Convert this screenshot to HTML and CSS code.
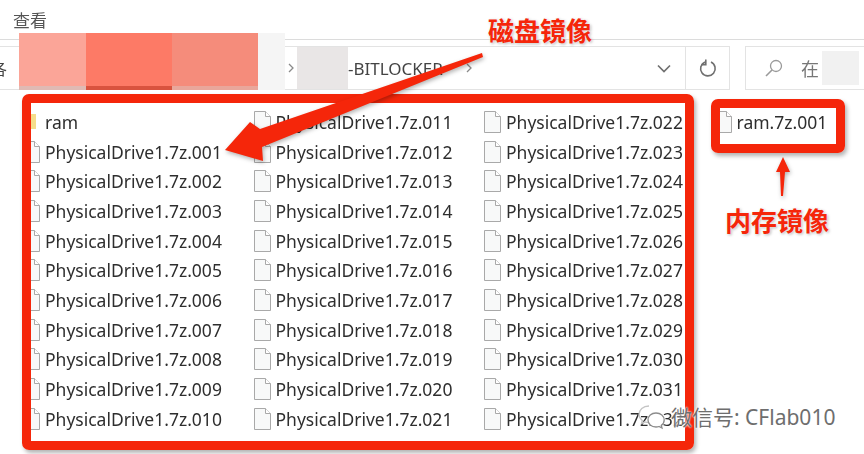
FILE: index.html
```html
<!DOCTYPE html>
<html lang="zh-CN">
<head>
    <meta charset="UTF-8">
    <meta name="viewport" content="width=device-width, initial-scale=1.0">
    <title>磁盘镜像</title>
    <link rel="stylesheet" href="styles.css">
</head>
<body>

<svg class="defs" width="0" height="0">
    <symbol id="file" viewBox="0 0 17 22">
        <path d="M.5.5h11l5 5v16H.5z" fill="#f8f9f9" stroke="#a9a9a9"/>
        <path d="M11.5.5v5h5" fill="#fff" stroke="#a9a9a9"/>
    </symbol>
</svg>

<div class="explorer">
    <!-- Menu -->
    <div class="menu"><span>查看</span></div>

    <!-- Address bar -->
    <div class="bar">
        <div class="address">
            <span class="cut">各</span>
            <svg class="crumb first" width="8" height="12" viewBox="0 0 8 12"><path d="M2 2l4 4-4 4" fill="none" stroke="#8a8a8a" stroke-width="1.3"/></svg>
            <span class="hidden-name"></span>
            <span class="path">-BITLOCKER</span>
            <svg class="crumb" width="8" height="12" viewBox="0 0 8 12"><path d="M2 2l4 4-4 4" fill="none" stroke="#8a8a8a" stroke-width="1.3"/></svg>
            <svg class="drop" width="14" height="9" viewBox="0 0 14 9"><path d="M1 1.500l6 6 6-6" fill="none" stroke="#707070" stroke-width="1.700"/></svg>
        </div>
        <div class="refresh">
            <svg width="18" height="18" viewBox="0 0 18 18"><path d="M6 2.900A7.300 7.300 0 1 0 12 3" fill="none" stroke="#6f6f6f" stroke-width="1.600"/><path d="M6.800.4v5.200H2.300" fill="none" stroke="#6f6f6f" stroke-width="1.600"/></svg>
        </div>
        <div class="search">
            <svg width="18" height="18" viewBox="0 0 18 18"><circle cx="11" cy="7" r="5.500" fill="none" stroke="#9a9a9a" stroke-width="1.300"/><path d="M7 11l-6 6" stroke="#9a9a9a" stroke-width="1.600"/></svg>
            <span class="search-text">在</span>
            <span class="hidden-search"></span>
        </div>
    </div>

    <!-- File list -->
    <div class="files">
        <div class="file"><span class="folder"></span>ram</div>
        <div class="file"><svg class="icon"><use href="#file"/></svg>PhysicalDrive1.7z.001</div>
        <div class="file"><svg class="icon"><use href="#file"/></svg>PhysicalDrive1.7z.002</div>
        <div class="file"><svg class="icon"><use href="#file"/></svg>PhysicalDrive1.7z.003</div>
        <div class="file"><svg class="icon"><use href="#file"/></svg>PhysicalDrive1.7z.004</div>
        <div class="file"><svg class="icon"><use href="#file"/></svg>PhysicalDrive1.7z.005</div>
        <div class="file"><svg class="icon"><use href="#file"/></svg>PhysicalDrive1.7z.006</div>
        <div class="file"><svg class="icon"><use href="#file"/></svg>PhysicalDrive1.7z.007</div>
        <div class="file"><svg class="icon"><use href="#file"/></svg>PhysicalDrive1.7z.008</div>
        <div class="file"><svg class="icon"><use href="#file"/></svg>PhysicalDrive1.7z.009</div>
        <div class="file"><svg class="icon"><use href="#file"/></svg>PhysicalDrive1.7z.010</div>

        <div class="file"><svg class="icon"><use href="#file"/></svg>PhysicalDrive1.7z.011</div>
        <div class="file"><svg class="icon"><use href="#file"/></svg>PhysicalDrive1.7z.012</div>
        <div class="file"><svg class="icon"><use href="#file"/></svg>PhysicalDrive1.7z.013</div>
        <div class="file"><svg class="icon"><use href="#file"/></svg>PhysicalDrive1.7z.014</div>
        <div class="file"><svg class="icon"><use href="#file"/></svg>PhysicalDrive1.7z.015</div>
        <div class="file"><svg class="icon"><use href="#file"/></svg>PhysicalDrive1.7z.016</div>
        <div class="file"><svg class="icon"><use href="#file"/></svg>PhysicalDrive1.7z.017</div>
        <div class="file"><svg class="icon"><use href="#file"/></svg>PhysicalDrive1.7z.018</div>
        <div class="file"><svg class="icon"><use href="#file"/></svg>PhysicalDrive1.7z.019</div>
        <div class="file"><svg class="icon"><use href="#file"/></svg>PhysicalDrive1.7z.020</div>
        <div class="file"><svg class="icon"><use href="#file"/></svg>PhysicalDrive1.7z.021</div>

        <div class="file"><svg class="icon"><use href="#file"/></svg>PhysicalDrive1.7z.022</div>
        <div class="file"><svg class="icon"><use href="#file"/></svg>PhysicalDrive1.7z.023</div>
        <div class="file"><svg class="icon"><use href="#file"/></svg>PhysicalDrive1.7z.024</div>
        <div class="file"><svg class="icon"><use href="#file"/></svg>PhysicalDrive1.7z.025</div>
        <div class="file"><svg class="icon"><use href="#file"/></svg>PhysicalDrive1.7z.026</div>
        <div class="file"><svg class="icon"><use href="#file"/></svg>PhysicalDrive1.7z.027</div>
        <div class="file"><svg class="icon"><use href="#file"/></svg>PhysicalDrive1.7z.028</div>
        <div class="file"><svg class="icon"><use href="#file"/></svg>PhysicalDrive1.7z.029</div>
        <div class="file"><svg class="icon"><use href="#file"/></svg>PhysicalDrive1.7z.030</div>
        <div class="file"><svg class="icon"><use href="#file"/></svg>PhysicalDrive1.7z.031</div>
        <div class="file"><svg class="icon"><use href="#file"/></svg>PhysicalDrive1.7z.032</div>

        <div class="file"><svg class="icon"><use href="#file"/></svg>ram.7z.001</div>
    </div>
</div>

<!-- Mosaic over the path -->
<div class="mosaic">
    <span class="tile a"></span>
    <span class="tile b"></span>
    <span class="tile c"></span>
    <span class="tile d"></span>
</div>

<!-- Red marks -->
<div class="frame disk-frame"></div>
<div class="frame ram-frame"></div>

<svg class="arrows" width="864" height="454" viewBox="0 0 864 454">
    <polygon points="225,150 250,122 260,129 482,53 483,57 262,147 263,161" fill="#f5260a"/>
    <polygon points="783,157 790,172 785,172 783,196 781,196 780,172 776,172" fill="#f5260a"/>
</svg>

<div class="label disk-label">磁盘镜像</div>
<div class="label ram-label">内存镜像</div>

<!-- Watermark -->
<div class="watermark">
    <svg width="28" height="26" viewBox="0 0 28 26">
        <path d="M11 2C5 2 1 6 1 10.500c0 2.500 1.300 4.500 3.300 6l-.8 3 3.300-1.700c1.400.4 2.700.6 4.200.6" fill="none" stroke="#c4c4c4" stroke-width="1.300"/>
        <path d="M18 9c-4.700 0-8 3-8 7s3.300 7 8 7c1 0 2-.2 3-.5l3 1.500-.7-2.600c1.800-1.300 2.900-3.200 2.900-5.400 0-4-3.500-7-8.200-7z" fill="#fff" stroke="#8c8c8c" stroke-width="1.300"/>
    </svg>
    <span>微信号: CFlab010</span>
</div>

</body>
</html>
```

FILE: styles.css
```css
* {
    margin: 0;
    padding: 0;
    box-sizing: border-box;
}

body {
    width: 864px;
    height: 454px;
    overflow: hidden;
    position: relative;
    background-color: #fff;
    font-family: "Noto Sans", "Noto Sans CJK SC", sans-serif;
    color: #2e2e2e;
}

.defs {
    position: absolute;
}

.explorer {
    filter: blur(0.35px);
}

/* Menu */
.menu {
    height: 40px;
    padding: 10px 0 0 13px;
    font-size: 17px;
    line-height: 22px;
    color: #555;
    border-bottom: 1px solid #dcdcdc;
}

/* Address bar */
.bar {
    display: flex;
    height: 44px;
    margin-top: 6px;
}

.address {
    display: flex;
    align-items: center;
    width: 686px;
    border: 1px solid #e3e3e3;
    border-left: 0;
    font-size: 17px;
    color: #444;
}

.cut {
    width: 7px;
    overflow: hidden;
    direction: rtl;
    font-size: 16px;
}

.crumb {
    margin-left: 12px;
}

.crumb.first {
    margin-left: 280px;
}

.hidden-name {
    width: 51px;
    height: 42px;
    margin-left: 2px;
    background-color: #e9e6e6;
}

.path {
    width: 105px;
}

.drop {
    margin-left: 184px;
}

.refresh {
    display: flex;
    align-items: center;
    justify-content: center;
    width: 44px;
    border: 1px solid #e3e3e3;
    border-left: 0;
}

.search {
    display: flex;
    align-items: center;
    width: 119px;
    margin-left: 15px;
    padding-left: 19px;
    border: 1px solid #e3e3e3;
    border-right: 0;
    color: #777;
    font-size: 18px;
}

.search-text {
    margin-left: 18px;
}

.hidden-search {
    width: 37px;
    height: 34px;
    margin-left: 3px;
    background-color: #f1f1f1;
}

/* File list */
.files {
    display: grid;
    grid-auto-flow: column;
    grid-template-rows: repeat(11, 29.7px);
    grid-auto-columns: 230.5px;
    margin-top: 17px;
    padding-left: 23px;
}

.file {
    display: flex;
    align-items: center;
    font-size: 17.5px;
    white-space: nowrap;
}

.icon {
    width: 17px;
    height: 22px;
    margin-right: 5px;
    flex-shrink: 0;
}

.folder {
    width: 13px;
    height: 15px;
    margin-right: 9px;
    background-color: #f5dd8b;
}

/* Mosaic */
.mosaic {
    position: absolute;
    left: 19px;
    top: 33px;
    display: flex;
    height: 57px;
}

.tile {
    display: block;
    height: 57px;
    border-bottom: 4px solid;
}

.tile.a {
    width: 67px;
    background-color: #fba598;
    border-color: #e0bab4;
}

.tile.b {
    width: 86px;
    background-color: #fd7a66;
    border-color: #d9533f;
}

.tile.c {
    width: 86px;
    background-color: #f58c7b;
    border-color: #e9a79b;
}

.tile.d {
    width: 27px;
    background-color: #f5f5f5;
    border-color: #f5f5f5;
}

/* Red marks */
.frame {
    position: absolute;
    border: 9px solid #f5260a;
    border-radius: 7px;
    box-shadow: 2px 3px 4px rgba(0, 0, 0, 0.3);
}

.disk-frame {
    left: 22px;
    top: 94px;
    width: 672px;
    height: 356px;
}

.ram-frame {
    left: 711px;
    top: 99px;
    width: 134px;
    height: 54px;
}

.arrows {
    position: absolute;
    left: 0;
    top: 0;
    filter: drop-shadow(1px 2px 2px rgba(0, 0, 0, 0.3));
}

.label {
    position: absolute;
    font-size: 26px;
    line-height: 30px;
    font-weight: bold;
    white-space: nowrap;
    color: #f5260a;
    text-shadow: 0 0 3px #fff, 1px 1px 3px rgba(0, 0, 0, 0.35);
}

.disk-label {
    left: 488px;
    top: 16px;
}

.ram-label {
    left: 725px;
    top: 206px;
}

/* Watermark */
.watermark {
    position: absolute;
    left: 638px;
    top: 404px;
    display: flex;
    align-items: center;
    gap: 5px;
    font-size: 21px;
    line-height: 26px;
    white-space: nowrap;
    color: #6e6e6e;
    text-shadow: 0 0 2px #fff, 0 0 2px #fff;
}
```
